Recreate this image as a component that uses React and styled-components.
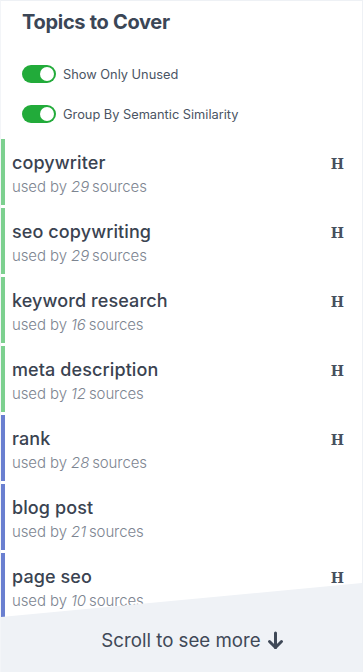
import React from "react";
import styled, { createGlobalStyle } from "styled-components";

const Global = createGlobalStyle`
  html, body { margin: 0; padding: 0; background: #fff; }
  body { font-family: Inter, "Noto Sans", sans-serif; -webkit-font-smoothing: antialiased; }
  * { box-sizing: border-box; }
`;

const Panel = styled.div`
  position: relative;
  width: 363px;
  height: 672px;
  overflow: hidden;
  border-top: 1px solid #eef1f5;
  border-right: 1px solid #eef1f5;
  border-left: 1px solid #f3f5f8;
  background: #fff;
`;

const Header = styled.div`
  padding: 9px 0 0 21px;
`;

const Title = styled.h1`
  margin: 0;
  font-size: 20px;
  line-height: 24px;
  font-weight: 700;
  color: #3b4656;
  letter-spacing: -0.3px;
`;

const Toggles = styled.div`
  display: flex;
  flex-direction: column;
  gap: 22px;
  margin-top: 31px;
`;

const ToggleRow = styled.label`
  display: flex;
  align-items: center;
  gap: 7px;
  font-size: 12.8px;
  color: #4a5463;
`;

const Switch = styled.span`
  position: relative;
  width: 34px;
  height: 18px;
  border-radius: 9px;
  background: #22ab3a;
  flex: none;
  &::after {
    content: "";
    position: absolute;
    right: 2px;
    top: 2px;
    width: 14px;
    height: 14px;
    border-radius: 50%;
    background: #fff;
  }
`;

const List = styled.div`
  display: flex;
  flex-direction: column;
  gap: 3px;
  margin-top: 16px;
`;

const Item = styled.div`
  display: flex;
  justify-content: space-between;
  align-items: flex-start;
  height: 66px;
  border-left: 4px solid ${(p) => p.$color};
  padding: 13px 18px 0 7px;
`;

const ItemText = styled.div`
  display: flex;
  flex-direction: column;
`;

const ItemTitle = styled.div`
  font-size: 18px;
  line-height: 22px;
  font-weight: 500;
  color: #3a4351;
  letter-spacing: 0.1px;
`;

const ItemSub = styled.div`
  margin-top: 3px;
  font-size: 15px;
  line-height: 20px;
  font-weight: 300;
  color: #7d8591;
  letter-spacing: -0.1px;
  em { font-style: italic; margin-right: 3px; }
`;

const HeadingMark = styled.span`
  margin-top: 4px;
  font-family: "DejaVu Serif", "Liberation Serif", serif;
  font-weight: 700;
  font-size: 14px;
  color: #46505e;
`;

const ScrollHint = styled.div`
  position: absolute;
  left: 0;
  right: 0;
  bottom: 0;
  height: 89px;
  background: #eff2f6;
  clip-path: polygon(0 34px, 100% 0, 100% 100%, 0 100%);
  display: flex;
  align-items: center;
  justify-content: center;
  padding: 25px 0 0 22px;
  gap: 6px;
  font-size: 18.7px;
  color: #3f4957;
`;

const items = [
  { t: "copywriter", n: 29, c: "#7dd08f", h: true },
  { t: "seo copywriting", n: 29, c: "#7dd08f", h: true },
  { t: "keyword research", n: 16, c: "#7dd08f", h: true },
  { t: "meta description", n: 12, c: "#7dd08f", h: true },
  { t: "rank", n: 28, c: "#6a7fd0", h: true },
  { t: "blog post", n: 21, c: "#6a7fd0", h: false },
  { t: "page seo", n: 10, c: "#6a7fd0", h: true },
];

const Arrow = () => (
  <svg width="17" height="19" viewBox="0 0 17 19" fill="none" stroke="#3f4957" strokeWidth="3" strokeLinecap="round" strokeLinejoin="round">
    <path d="M8.5 2v14.5" />
    <path d="M2.5 10.5l6 6 6-6" />
  </svg>
);

export default function App() {
  return (
    <>
      <Global />
      <Panel>
        <Header>
          <Title>Topics to Cover</Title>
          <Toggles>
            <ToggleRow><Switch />Show Only Unused</ToggleRow>
            <ToggleRow><Switch />Group By Semantic Similarity</ToggleRow>
          </Toggles>
        </Header>
        <List>
          {items.map((it) => (
            <Item key={it.t} $color={it.c}>
              <ItemText>
                <ItemTitle>{it.t}</ItemTitle>
                <ItemSub>used by <em>{it.n}</em>sources</ItemSub>
              </ItemText>
              {it.h && <HeadingMark>H</HeadingMark>}
            </Item>
          ))}
        </List>
        <ScrollHint>
          Scroll to see more <Arrow />
        </ScrollHint>
      </Panel>
    </>
  );
}
